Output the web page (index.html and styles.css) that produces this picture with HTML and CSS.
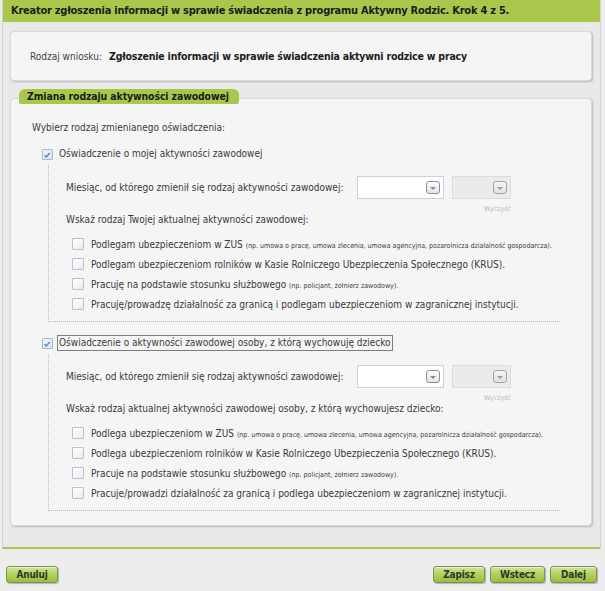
FILE: index.html
```html
<!DOCTYPE html>
<html lang="pl">
<head>
<meta charset="utf-8">
<title>Kreator zgłoszenia</title>
<link rel="stylesheet" href="styles.css">
</head>
<body>
<div class="wizard">
  <div class="wizard-header">Kreator zgłoszenia informacji w sprawie świadczenia z programu Aktywny Rodzic. Krok 4 z 5.</div>
  <div class="wizard-body">
    <div class="card info-card">
      <span class="info-label">Rodzaj wniosku:</span>
      <span class="info-value">Zgłoszenie informacji w sprawie świadczenia aktywni rodzice w pracy</span>
    </div>
    <div class="section">
      <div class="section-tab">Zmiana rodzaju aktywności zawodowej</div>
      <div class="card section-card">
        <div class="prompt">Wybierz rodzaj zmienianego oświadczenia:</div>

        <div class="check-row main">
          <span class="cb checked"><svg viewBox="0 0 12 12" width="12" height="12"><path d="M3 6.2 L5.1 8.4 L9.2 3.6" fill="none" stroke="#4b86c8" stroke-width="1.5"/></svg></span>
          <span class="cb-label">Oświadczenie o mojej aktywności zawodowej</span>
        </div>
        <div class="group">
          <div class="month-row">
            <span class="month-label">Miesiąc, od którego zmienił się rodzaj aktywności zawodowej:</span>
            <div class="select"><span class="select-btn"><span class="tri"></span></span></div>
            <div class="select-col">
              <div class="select disabled"><span class="select-btn"><span class="tri"></span></span></div>
              <span class="clear">Wyczyść</span>
            </div>
          </div>
          <div class="question">Wskaż rodzaj Twojej aktualnej aktywności zawodowej:</div>
          <div class="options">
            <div class="opt"><span class="cb"></span><span class="opt-label">Podlegam ubezpieczeniom w ZUS <small>(np. umowa o pracę, umowa zlecenia, umowa agencyjna, pozarolnicza działalność gospodarcza).</small></span></div>
            <div class="opt"><span class="cb"></span><span class="opt-label">Podlegam ubezpieczeniom rolników w Kasie Rolniczego Ubezpieczenia Społecznego (KRUS).</span></div>
            <div class="opt"><span class="cb"></span><span class="opt-label">Pracuję na podstawie stosunku służbowego <small>(np. policjant, żołnierz zawodowy).</small></span></div>
            <div class="opt"><span class="cb"></span><span class="opt-label">Pracuję/prowadzę działalność za granicą i podlegam ubezpieczeniom w zagranicznej instytucji.</span></div>
          </div>
        </div>

        <div class="check-row main second">
          <span class="cb checked"><svg viewBox="0 0 12 12" width="12" height="12"><path d="M3 6.2 L5.1 8.4 L9.2 3.6" fill="none" stroke="#4b86c8" stroke-width="1.5"/></svg></span>
          <span class="cb-label focused">Oświadczenie o aktywności zawodowej osoby, z którą wychowuję dziecko</span>
        </div>
        <div class="group">
          <div class="month-row">
            <span class="month-label">Miesiąc, od którego zmienił się rodzaj aktywności zawodowej:</span>
            <div class="select"><span class="select-btn"><span class="tri"></span></span></div>
            <div class="select-col">
              <div class="select disabled"><span class="select-btn"><span class="tri"></span></span></div>
              <span class="clear">Wyczyść</span>
            </div>
          </div>
          <div class="question">Wskaż rodzaj aktualnej aktywności zawodowej osoby, z którą wychowujesz dziecko:</div>
          <div class="options">
            <div class="opt"><span class="cb"></span><span class="opt-label">Podlega ubezpieczeniom w ZUS <small>(np. umowa o pracę, umowa zlecenia, umowa agencyjna, pozarolnicza działalność gospodarcza).</small></span></div>
            <div class="opt"><span class="cb"></span><span class="opt-label">Podlega ubezpieczeniom rolników w Kasie Rolniczego Ubezpieczenia Społecznego (KRUS).</span></div>
            <div class="opt"><span class="cb"></span><span class="opt-label">Pracuje na podstawie stosunku służbowego <small>(np. policjant, żołnierz zawodowy).</small></span></div>
            <div class="opt"><span class="cb"></span><span class="opt-label">Pracuje/prowadzi działalność za granicą i podlega ubezpieczeniom w zagranicznej instytucji.</span></div>
          </div>
        </div>
      </div>
    </div>
  </div>
</div>
<div class="actions">
  <button class="btn btn-cancel">Anuluj</button>
  <div class="actions-right">
    <button class="btn btn-save">Zapisz</button>
    <button class="btn btn-back">Wstecz</button>
    <button class="btn btn-next">Dalej</button>
  </div>
</div>
</body>
</html>
```

FILE: styles.css
```css
* { box-sizing: border-box; }
html, body {
  margin: 0;
  padding: 0;
  background: #ededed;
}
body {
  font-family: "DejaVu Sans Condensed", "DejaVu Sans", sans-serif;
  font-stretch: semi-condensed;
  font-size: 10px;
  color: #3a3a3a;
  width: 605px;
  height: 591px;
  overflow: hidden;
}
.wizard {
  margin-left: 2px;
  width: 599px;
  border-left: 1px solid #d4d4d4;
  border-right: 1px solid #d4d4d4;
}
.wizard-header {
  height: 22px;
  line-height: 22px;
  background: #a9c84b;
  padding-left: 8px;
  font-size: 11px;
  font-weight: bold;
  color: #1c1c1c;
  letter-spacing: -0.25px;
}
.wizard-body {
  background: #e9e9e9;
  padding: 9px 8px 21px 7px;
  border-bottom: 2px solid #a9c84b;
}
.card {
  background: #f5f5f5;
  border: 1px solid #d9d9d9;
  border-radius: 4px;
  box-shadow: 1px 1px 2px #b9b9b9;
}
.info-card {
  height: 50px;
  display: flex;
  align-items: center;
  padding-left: 19px;
  gap: 7px;
}
.info-label { color: #444; }
.info-value { font-size: 10.5px; font-weight: bold; color: #1c1c1c; letter-spacing: -0.2px; }
.section { margin-top: 8px; }
.section-tab {
  position: relative;
  z-index: 1;
  display: inline-block;
  margin-left: 9px;
  height: 15px;
  line-height: 15px;
  padding: 0 10px 0 8px;
  background: #a9c84b;
  border-radius: 6px 6px 2px 2px;
  font-size: 10.4px;
  font-weight: bold;
  color: #1c1c1c;
  letter-spacing: -0.1px;
  vertical-align: top;
}
.section-card {
  margin-top: -6px;
  padding: 22px 0 14px 21px;
}
.prompt { line-height: 14px; }
.check-row {
  display: flex;
  align-items: center;
  height: 16px;
}
.check-row.main { margin-top: 11px; margin-left: 10px; }
.check-row.main.second { margin-top: 13px; }
.cb {
  width: 12px;
  height: 12px;
  flex: none;
  border: 1px solid #b8c2cc;
  border-radius: 1px;
  background: linear-gradient(135deg, #ffffff 0%, #e8edf3 100%);
  display: inline-flex;
}
.cb.checked {
  width: 11px;
  height: 11px;
  background: linear-gradient(135deg, #eef4fb 0%, #d9e4f0 100%);
  border-color: #a9bacb;
  overflow: hidden;
}
.cb.checked svg { margin: -1px 0 0 -1px; }
.cb-label { margin-left: 4px; line-height: 14px; padding: 0 1px; border: 1px solid transparent; }
.cb-label.focused { border-color: #7d7d7d; }
.group {
  margin: 3px 31px 0 16px;
  border-left: 1px dotted #bdbdbd;
  border-bottom: 1px dotted #bdbdbd;
  padding: 11px 0 7px 17px;
}
.month-row {
  display: flex;
  align-items: flex-start;
}
.month-label {
  width: 291px;
  line-height: 23px;
  white-space: nowrap;
}
.select {
  width: 87px;
  height: 23px;
  background: #fff;
  border: 1px solid #c9d1da;
  display: flex;
  justify-content: flex-end;
  align-items: center;
  padding-right: 3px;
}
.select-col {
  margin-left: 8px;
  width: 59px;
  display: flex;
  flex-direction: column;
  align-items: flex-end;
}
.select.disabled {
  width: 59px;
  background: #ebebeb;
  border-color: #dcdcdc;
}
.select-btn {
  width: 14px;
  height: 13px;
  border: 1px solid #8f8f8f;
  border-radius: 3px;
  background: linear-gradient(#fdfdfd, #e4e4e4);
  display: flex;
  align-items: center;
  justify-content: center;
}
.select.disabled .select-btn { border-color: #a5a5a5; background: linear-gradient(#f4f4f4, #e2e2e2); }
.tri {
  width: 0;
  height: 0;
  border-left: 3px solid transparent;
  border-right: 3px solid transparent;
  border-top: 3px solid #7a8bb0;
  margin-top: 1px;
}
.select.disabled .tri { border-top-color: #9a9a9a; }
.clear {
  margin-top: 5px;
  font-size: 7px;
  line-height: 10px;
  color: #b9b9b9;
}
.question { line-height: 12px; }
.options { margin: 8px 0 0 6px; }
.opt {
  display: flex;
  align-items: center;
  height: 20px;
}
.opt-label { margin-left: 7px; white-space: nowrap; }
.opt-label small { font-size: 7px; }
.actions {
  margin-top: 17px;
  padding: 0 8px 0 6px;
  display: flex;
  justify-content: space-between;
}
.actions-right { display: flex; gap: 5px; }
.btn {
  height: 17px;
  padding: 0;
  font-family: "DejaVu Sans Condensed", "DejaVu Sans", sans-serif;
  font-stretch: condensed;
  font-size: 10px;
  font-weight: bold;
  letter-spacing: -0.2px;
  color: #2e3a2a;
  border: 1px solid #7f8c68;
  border-radius: 3px;
  background: linear-gradient(#d2e69a 0%, #b4d260 45%, #9cbc3d 100%);
  box-shadow: inset 0 1px 0 rgba(255,255,255,0.5), 1px 1px 1px #b4b4b4;
}
.btn-cancel { width: 52px; }
.btn-save { width: 52px; }
.btn-back { width: 55px; }
.btn-next { width: 47px; }
```
